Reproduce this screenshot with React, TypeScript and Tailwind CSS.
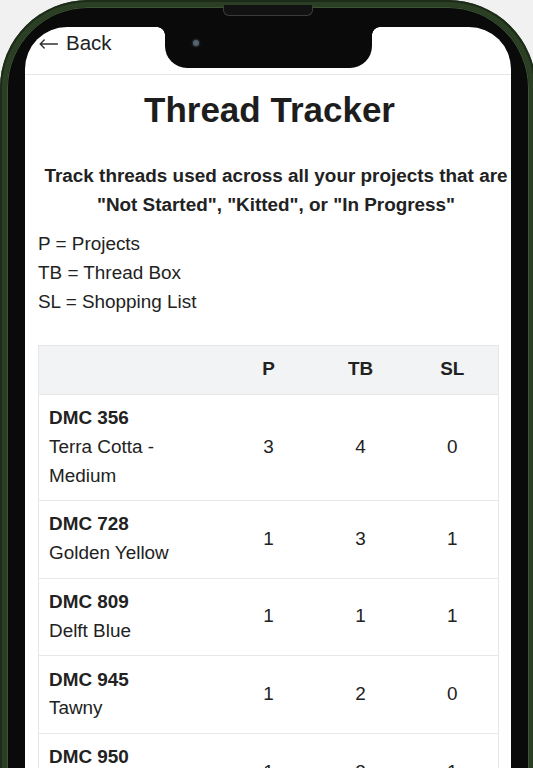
import React from "react";

type Row = { code: string; name: string; p: number; tb: number; sl: number };

const rows: Row[] = [
  { code: "DMC 356", name: "Terra Cotta - Medium", p: 3, tb: 4, sl: 0 },
  { code: "DMC 728", name: "Golden Yellow", p: 1, tb: 3, sl: 1 },
  { code: "DMC 809", name: "Delft Blue", p: 1, tb: 1, sl: 1 },
  { code: "DMC 945", name: "Tawny", p: 1, tb: 2, sl: 0 },
  { code: "DMC 950", name: "Desert Sand - Light", p: 1, tb: 2, sl: 1 },
];

export default function App() {
  return (
    <div
      className="relative w-[533px] h-[768px] overflow-hidden bg-[#f1f1f1] text-[#222]"
      style={{ fontFamily: '"Liberation Sans", Arial, Helvetica, sans-serif' }}
    >
      {/* phone frame */}
      <div className="relative w-[536px] h-[920px] shrink-0 rounded-[88px] bg-[#2a3f24] p-[7px] shadow-[inset_0_0_0_2px_#1c2c18]">
        {/* speaker slot on the top rim */}
        <div className="absolute left-[223px] top-[5px] w-[90px] h-[11px] rounded-b-[6px] bg-[#121212] border border-t-0 border-[#3b3b3b]" />
        <div className="h-full rounded-[81px] bg-[#0a0a0a] pt-[20px] px-[18px] shadow-[inset_0_0_0_1px_#3d5535]">
          {/* screen */}
          <div className="relative h-full rounded-t-[42px] bg-white overflow-hidden">
            {/* notch */}
            <div className="absolute left-[132px] top-0 w-[8px] h-[8px] bg-[radial-gradient(circle_at_0_100%,transparent_7.5px,#0a0a0a_8px)]" />
            <div className="absolute left-[347px] top-0 w-[8px] h-[8px] bg-[radial-gradient(circle_at_100%_100%,transparent_7.5px,#0a0a0a_8px)]" />
            <div className="absolute left-[140px] top-0 w-[207px] h-[41px] rounded-b-[22px] bg-[#0a0a0a]">
              <div className="absolute left-[28px] top-[13px] w-[6px] h-[6px] rounded-full bg-[#56636f] shadow-[0_0_0_1.5px_#1c2126]" />
            </div>

            {/* top bar */}
            <div className="h-[48px] border-b border-[#e6e6e6] pl-[14px] pt-[4px]">
              <div className="flex h-[24px] items-center gap-[8px] text-[20.5px] leading-[24px]">
                <svg width="19" height="10" viewBox="0 0 19 10" className="mt-[1px]" aria-hidden="true">
                  <path d="M18.5 5H1.2M5.2 1L1.2 5L5.2 9" fill="none" stroke="#333" strokeWidth="1.4" strokeLinecap="round" strokeLinejoin="round" />
                </svg>
                <span>Back</span>
              </div>
            </div>

            {/* content */}
            <div className="px-[13px]">
              <h1 className="mt-[14px] pl-[3px] text-center text-[35px] leading-[42px] font-bold text-[#1d1d1d]">
                Thread Tracker
              </h1>

              <p className="mt-[31px] ml-[6px] w-[464px] whitespace-nowrap text-center text-[18.9px] leading-[28.7px] font-bold">
                Track threads used across all your projects that are
                <br />
                "Not Started", "Kitted", or "In Progress"
              </p>

              <div className="mt-[11px] text-[18.9px] leading-[28.8px]">
                <div>P = Projects</div>
                <div>TB = Thread Box</div>
                <div>SL = Shopping List</div>
              </div>

              <table className="mt-[28px] w-[460px] table-fixed border-collapse border border-[#e6e6e6] text-[18.9px] leading-[28.8px]">
                <colgroup>
                  <col className="w-[184px]" />
                  <col className="w-[92px]" />
                  <col className="w-[92px]" />
                  <col className="w-[92px]" />
                </colgroup>
                <thead>
                  <tr className="bg-[#f2f3f4]">
                    <th className="py-[9.5px]" />
                    <th className="py-[9.5px] text-center font-bold">P</th>
                    <th className="py-[9.5px] text-center font-bold">TB</th>
                    <th className="py-[9.5px] text-center font-bold">SL</th>
                  </tr>
                </thead>
                <tbody>
                  {rows.map((r) => (
                    <tr key={r.code} className="border-t border-[#e8e8e8]">
                      <td className="py-[9.5px] pl-[10px] pr-[10px] align-top text-left">
                        <div className="font-bold">{r.code}</div>
                        <div>{r.name}</div>
                      </td>
                      <td className="py-[9.5px] text-center align-middle">{r.p}</td>
                      <td className="py-[9.5px] text-center align-middle">{r.tb}</td>
                      <td className="py-[9.5px] text-center align-middle">{r.sl}</td>
                    </tr>
                  ))}
                </tbody>
              </table>
              <div className="h-[40px]" />
            </div>
          </div>
        </div>
      </div>
    </div>
  );
}
